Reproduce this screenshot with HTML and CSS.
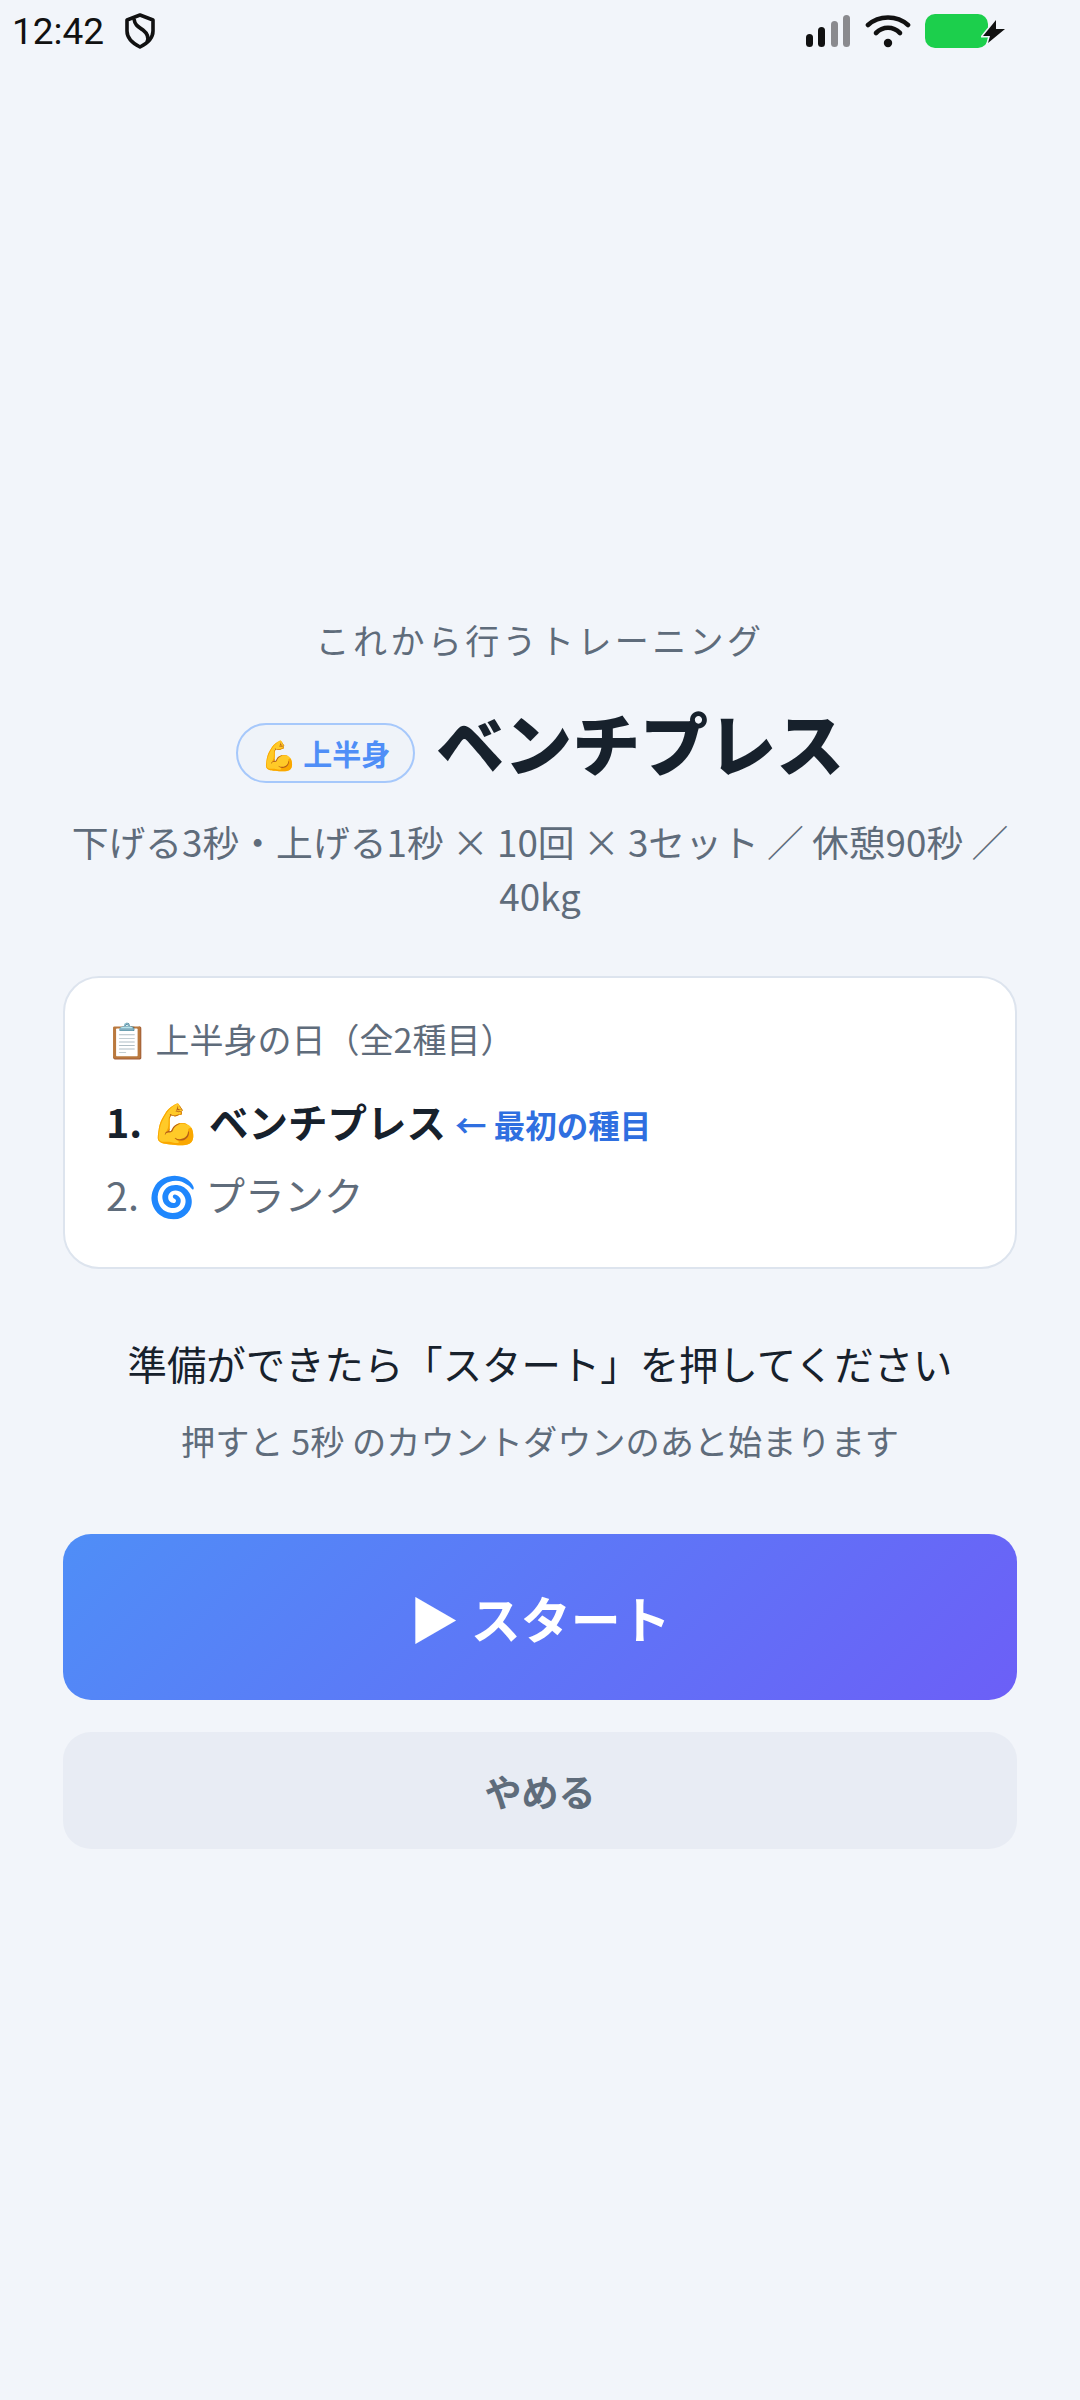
FILE: index.html
```html
<!DOCTYPE html>
<html lang="ja">
<head>
    <meta charset="UTF-8">
    <meta name="viewport" content="width=device-width, initial-scale=1.0">
    <title>ベンチプレス</title>
    <link rel="stylesheet" href="styles.css">
</head>
<body>
    <div class="status-bar">
        <div class="status-left">
            <span class="clock">12:42</span>
            <svg class="shield" width="30" height="36" viewBox="0 0 30 36">
                <path d="M15 2 L28 7 V18 C28 26 21 31 15 34 C9 31 2 26 2 18 V7 Z" fill="none" stroke="#111" stroke-width="3.6" stroke-linejoin="round"/>
                <path d="M9 6 C10 13 14 14 18 17 C23 21 24 25 22 29" fill="none" stroke="#111" stroke-width="3.6"/>
            </svg>
        </div>
        <div class="status-right">
            <svg width="46" height="34" viewBox="0 0 46 34">
                <rect x="1" y="20" width="7" height="13" rx="3.5" fill="#111"/>
                <rect x="13" y="13" width="7" height="20" rx="3.5" fill="#111"/>
                <rect x="26" y="7" width="7" height="26" rx="3.5" fill="#8a8a8e"/>
                <rect x="38" y="1" width="7" height="32" rx="3.5" fill="#8a8a8e"/>
            </svg>
            <svg class="wifi" width="46" height="34" viewBox="0 0 46 34">
                <path d="M3 11 C14 1 32 1 43 11" fill="none" stroke="#111" stroke-width="4.6" stroke-linecap="round"/>
                <path d="M11 19 C18 12 28 12 35 19" fill="none" stroke="#111" stroke-width="4.6" stroke-linecap="round"/>
                <circle cx="23" cy="29" r="4.2" fill="#111"/>
            </svg>
            <div class="battery">
                <div class="battery-fill"></div>
                <svg class="bolt" width="26" height="27" viewBox="0 0 26 27">
                    <path d="M15 2 L2 18 H9 L7 25 L24 11 H15 Z" fill="#111" stroke="#f2f5fa" stroke-width="3" paint-order="stroke"/>
                </svg>
            </div>
        </div>
    </div>

    <main class="container">
        <p class="lead">これから行うトレーニング</p>
        <div class="title-row">
            <span class="tag">💪 上半身</span>
            <h1>ベンチプレス</h1>
        </div>
        <p class="detail">下げる3秒・上げる1秒 × 10回 × 3セット ／ 休憩90秒 ／ 40kg</p>

        <div class="plan-card">
            <div class="plan-title">📋 上半身の日（全2種目）</div>
            <div class="plan-item current">1. 💪 ベンチプレス <span class="first-note">← 最初の種目</span></div>
            <div class="plan-item">2. 🌀 プランク</div>
        </div>

        <p class="prompt">準備ができたら「スタート」を押してください</p>
        <p class="hint">押すと 5秒 のカウントダウンのあと始まります</p>

        <button class="start-button">▶ スタート</button>
        <button class="quit-button">やめる</button>
    </main>
</body>
</html>
```

FILE: styles.css
```css
* {
    box-sizing: border-box;
}

html, body {
    height: 100%;
}

body {
    font-family: 'Noto Sans CJK JP', 'Noto Sans', sans-serif;
    margin: 0;
    padding: 0;
    background-color: #f2f5fa;
    color: #17212c;
}

.status-bar {
    display: flex;
    justify-content: space-between;
    align-items: center;
    height: 62px;
    padding: 0 73px 0 12px;
}

.status-left,
.status-right {
    display: flex;
    align-items: center;
}

.clock {
    font-family: 'Roboto', sans-serif;
    font-size: 37px;
    color: #111;
}

.shield {
    margin-left: 21px;
}

.status-right .wifi {
    margin-left: 14px;
}

.battery {
    display: flex;
    align-items: center;
    margin-left: 14px;
}

.battery-fill {
    width: 63px;
    height: 34px;
    border-radius: 10px;
    background-color: #1ccf4c;
}

.bolt {
    margin-left: -7px;
}

.container {
    padding: 554px 63px 0;
    text-align: center;
}

.lead {
    margin: 0;
    font-size: 34px;
    line-height: 48px;
    letter-spacing: 3.4px;
    color: #5f6c7b;
}

.title-row {
    display: flex;
    justify-content: center;
    align-items: center;
    gap: 21px;
    margin-top: 33px;
}

.title-row h1 {
    margin: 0;
    font-size: 68px;
    line-height: 90px;
    font-weight: 800;
}

.tag {
    margin-top: 22px;
    padding: 7px 23px;
    border: 2px solid #a6c8fb;
    border-radius: 40px;
    background-color: #eff3f9;
    color: #4f8ef7;
    font-size: 29px;
    font-weight: 700;
    line-height: 42px;
}

.detail {
    margin: 27px 0 0;
    font-size: 36.8px;
    line-height: 54px;
    color: #5f6c7b;
}

.plan-card {
    margin-top: 54px;
    padding: 37px 41px 43px;
    border: 2px solid #dde4ee;
    border-radius: 36px;
    background-color: #fff;
    text-align: left;
}

.plan-title {
    font-size: 34px;
    line-height: 48px;
    color: #5f6c7b;
}

.plan-item {
    margin-top: 10px;
    font-size: 39.5px;
    line-height: 60px;
    color: #5f6c7b;
}

.plan-item.current {
    margin-top: 28px;
    font-weight: 700;
    color: #17212c;
}

.first-note {
    font-size: 31.5px;
    color: #2f6fe0;
}

.prompt {
    margin: 66px 0 0;
    font-size: 39.4px;
    line-height: 56px;
    color: #17212c;
}

.hint {
    margin: 25px 0 0;
    font-size: 34.2px;
    line-height: 48px;
    color: #5f6c7b;
}

.start-button,
.quit-button {
    display: block;
    width: 100%;
    border: none;
    border-radius: 28px;
    font-family: inherit;
    font-weight: 700;
}

.start-button {
    height: 166px;
    margin-top: 70px;
    background: linear-gradient(135deg, #4f8ef7, #6c5ff7);
    color: #fff;
    font-size: 50px;
}

.quit-button {
    height: 117px;
    margin-top: 32px;
    background-color: #e8ecf4;
    color: #5f6c7b;
    font-size: 37px;
}
```
